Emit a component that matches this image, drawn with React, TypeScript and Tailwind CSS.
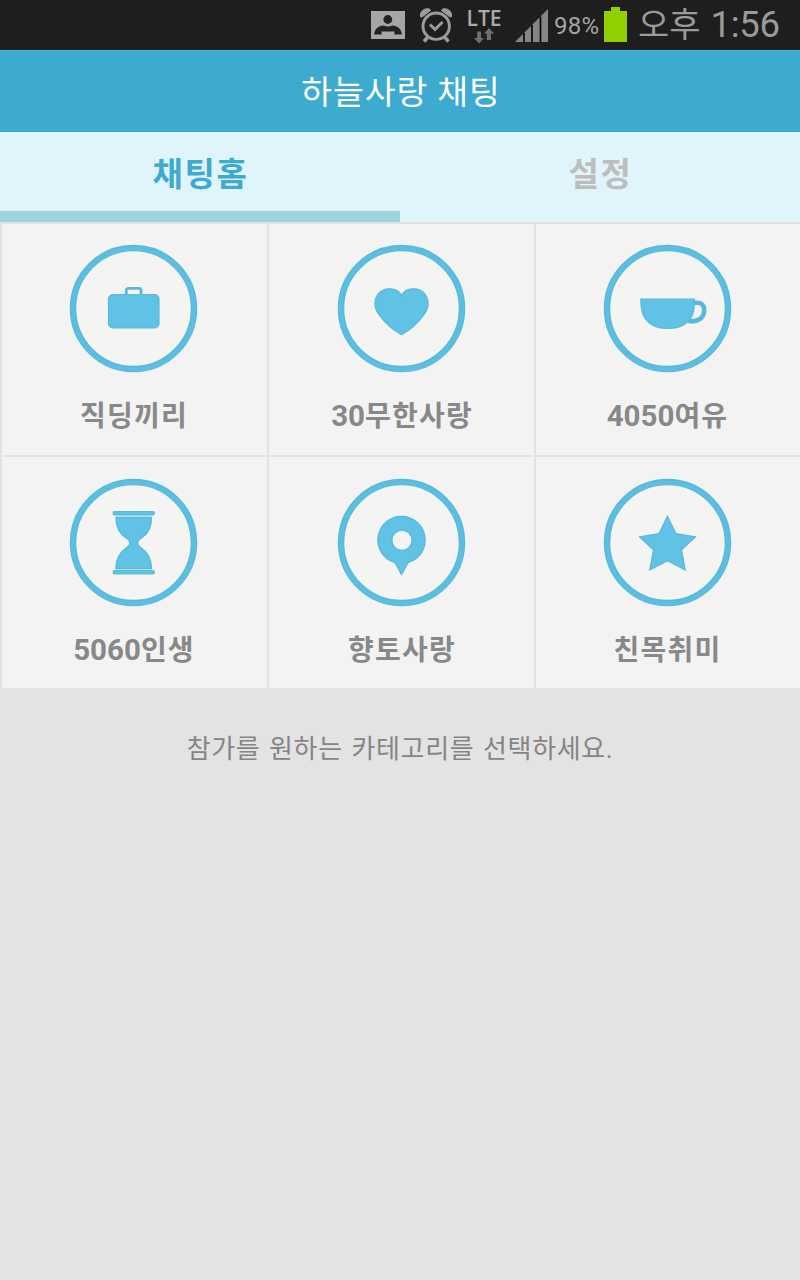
import type { ReactNode } from "react";

const categories: { age?: string; name: string; icon: ReactNode }[] = [
  {
    name: "직딩끼리",
    icon: (
      <>
        <rect x="39" y="50" width="50.5" height="33.5" rx="4.5" />
        <path d="M56.8 50V46Q56.8 43.9 59 43.9H69.4Q71.5 43.9 71.5 46V50" fill="none" strokeWidth="2.8" />
      </>
    ),
  },
  {
    age: "30",
    name: "무한사랑",
    icon: (
      <path d="M64 50.8C59.5 42.5 46 42.2 40.2 50C35.5 57 37.5 65 42.5 71.5C48 79 56 86 64 90.3C72 86 80 79 85.5 71.5C90.5 65 92.5 57 87.8 50C82 42.2 68.5 42.5 64 50.8Z" />
    ),
  },
  {
    age: "4050",
    name: "여유",
    icon: (
      <>
        <path d="M37.3 54.7H90.8C91 62 90.5 69.5 86.5 75C81 82.5 73 84 64 84C55 84 47 81.5 42 74.5C38 69 37.3 62 37.3 54.7Z" />
        <path d="M90.5 58.3H93C98.5 57.5 100.8 61.5 100.7 66C100.6 73 95 77.5 85 76.7" fill="none" strokeWidth="4.6" />
      </>
    ),
  },
  {
    age: "5060",
    name: "인생",
    icon: (
      <>
        <path d="M46.5 37.8H82M46.5 90.9H82" stroke="#b5e0ef" strokeWidth="1.8" />
        <rect x="43.6" y="33" width="41.2" height="3.5" rx="1.5" />
        <rect x="43.6" y="92" width="41.2" height="3.5" rx="1.5" />
        <path d="M46.4 39H82C82 47.5 79 55.5 71.5 59.8C67 62.5 67 66.5 71.5 69.2C79 74 82 82 82 90H46.4C46.4 82 49.5 74 57 69.2C61.5 66.5 61.5 62.5 57 59.8C49.5 55.5 46.4 47.5 46.4 39Z" />
      </>
    ),
  },
  {
    name: "향토사랑",
    icon: (
      <path
        fillRule="evenodd"
        d="M64 37.8A23.6 23.6 0 0 1 71.5 83.8Q70.2 84.4 69.5 86L64 96L58.5 86Q57.8 84.4 56.5 83.8A23.6 23.6 0 0 1 64 37.8ZM64.5 51.7A10.1 10.1 0 1 0 64.5 71.9A10.1 10.1 0 1 0 64.5 51.7Z"
      />
    ),
  },
  {
    name: "친목취미",
    icon: (
      <path d="M64 37.7L72.4 55.1L92 58.3L78 71.3L81.7 91.5L64 82.2L46.3 91.5L50 71.3L36 58.3L55.6 55.1Z" />
    ),
  },
];

function StatusBar() {
  return (
    <div className="flex h-[50px] items-start bg-[#1e1e1e] pl-[370px] font-['Roboto','Noto_Sans_CJK_KR',sans-serif] text-[#a5a5a5]">
      <svg className="mt-[10px] h-[30px] w-[36px] shrink-0" viewBox="0 0 36 30">
        <rect x="1" y="1" width="34" height="28" fill="#a6a6a6" />
        <circle cx="17.8" cy="9.5" r="4.4" fill="#222" />
        <path d="M4 24.5C5 18.5 8.5 15.8 13.5 15.5Q18 17.5 22.5 15.5C27.5 15.8 31 18.5 32 24.5H24.5V21.5H11.5V24.5Z" fill="#222" />
      </svg>
      <svg className="mt-[7px] ml-[13px] h-[37px] w-[34px] shrink-0" viewBox="0 0 34 37" fill="none" stroke="#9c9c9c">
        <circle cx="17.2" cy="19.2" r="13.2" strokeWidth="2.9" />
        <path d="M11 17.5L16 22.5L23.5 15" strokeWidth="3" />
        <path d="M8.5 30.5L5 34.5M26 30.5L29.5 34.5" strokeWidth="3.5" />
        <path d="M1.5 9.8C0.5 5 5 0.5 10.5 2L11.5 3.5L3 10ZM32.5 9.8C33.5 5 29 0.5 23.5 2L22.5 3.5L31 10Z" fill="#9c9c9c" />
      </svg>
      <div className="ml-[13px] flex w-[36px] shrink-0 flex-col items-center pt-[8px]">
        <span className="font-['Open_Sans',sans-serif] text-[21px] leading-[20px] font-semibold text-[#aaa]">LTE</span>
        <svg className="h-[16px] w-[22px]" viewBox="0 0 22 16" fill="#707070">
          <path d="M4.2 3.5H8V10H11L6 15.5L1 10H4.2Z" />
          <path d="M13.8 12V5.5H11L16 0L21.2 5.5H18V12Z" />
        </svg>
      </div>
      <svg className="mt-[9px] ml-[13px] h-[33px] w-[33px] shrink-0" viewBox="0 0 33 33">
        <path d="M0 33L33 0V33Z" fill="#858585" />
        <path d="M9 24V33M17 16V33M25.5 7.5V33" stroke="#080808" strokeWidth="1.7" />
      </svg>
      <span className="mt-[10px] ml-[6px] w-[50px] shrink-0 text-[24px] leading-[32px] tracking-[0.2px]">98%</span>
      <svg className="mt-[7px] h-[35px] w-[23px] shrink-0" viewBox="0 0 23 35" fill="#91cf00">
        <path d="M7 0H16V4H23V35H0V4H7Z" />
      </svg>
      <span className="ml-[11px] flex items-baseline whitespace-nowrap text-[#9a9a9a]">
        <span className="text-[34px] leading-[50px]">오후</span>
        <span className="ml-[10px] text-[36.5px] leading-[50px] tracking-[-0.3px]">1:56</span>
      </span>
    </div>
  );
}

export default function App() {
  return (
    <div className="flex h-[1280px] w-[800px] flex-col overflow-hidden bg-[#e3e3e3] font-['Roboto','Noto_Sans_CJK_KR',sans-serif]">
      <StatusBar />

      <header className="flex h-[82px] items-center justify-center border-t border-b border-t-[#48b2d8] border-b-[#379fc8] bg-[#3daad0] pt-[4px] pl-[2px]">
        <h1 className="text-[33.5px] leading-[50px] tracking-[0.9px] text-white">하늘사랑 채팅</h1>
      </header>

      <nav className="grid h-[90px] grid-cols-2 bg-[#dff5fb] text-[33px] leading-[50px] font-bold tracking-[1.6px]">
        <button className="border-b-[11px] border-[#a0d3e0] pt-[7px] pl-[1px] text-[#3eaad0]">채팅홈</button>
        <button className="pt-[7px] pb-[11px] pl-[1px] text-[#bdbdbd]">설정</button>
      </nav>

      <main className="grid grid-cols-[267px_267px_266px]">
        {categories.map((c) => (
          <button
            key={c.name}
            className="flex h-[233px] flex-col items-center border-t-2 border-l-2 border-[#e2e2e2] bg-[#f3f3f3] pt-[20px] pr-[2px] nth-[n+4]:pt-[21px] nth-[3n+2]:pr-0"
          >
            <svg
              className="size-[129px] shrink-0"
              viewBox="-0.5 -0.5 129 129"
              fill="#60c2e5"
              stroke="#57b9dc"
              strokeWidth="1.2"
            >
              <circle cx="64" cy="64" r="60.5" fill="#f4f4f3" strokeWidth="6.5" />
              <circle cx="64" cy="64.5" r="60.5" fill="none" stroke="#5cbee1" strokeWidth="4" />
              {c.icon}
            </svg>
            <span className="mt-[21px] pl-[1px] text-[29.5px] leading-[44px] font-bold whitespace-nowrap text-[#888]">
              {c.age}
              <span className="text-[28px] tracking-[1.2px]">{c.name}</span>
            </span>
          </button>
        ))}
      </main>

      <p className="mt-[41px] text-center text-[26px] leading-[40px] tracking-[0.65px] text-[#858585] [word-spacing:1.6px]">
        참가를 원하는 카테고리를 선택하세요.
      </p>
    </div>
  );
}
